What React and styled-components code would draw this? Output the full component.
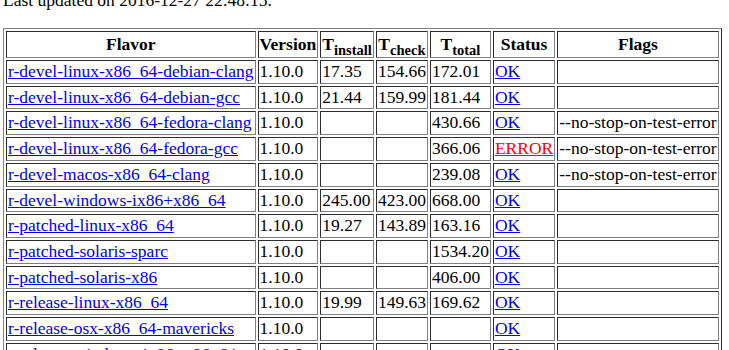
import styled, { createGlobalStyle } from "styled-components";

const GlobalStyle = createGlobalStyle`
  html, body {
    margin: 0;
    padding: 0;
    background: #fff;
  }
  body {
    font-family: "Liberation Serif", "Times New Roman", serif;
    font-size: 17.5px;
    color: #000;
    overflow: hidden;
  }
`;

const Page = styled.div`
  padding-left: 3px;
`;

const Updated = styled.p`
  margin: -10px 0 18px;
  line-height: 20px;
`;

const Table = styled.table`
  border: 1px outset grey;
  border-spacing: 2px;
  border-collapse: separate;
`;

const Th = styled.th`
  border: 1px inset grey;
  padding: 1px;
  font-weight: bold;
  text-align: center;
  white-space: nowrap;
  line-height: 23px;

  sub {
    line-height: 0;
    font-size: 0.83em;
  }
`;

const Td = styled.td`
  border: 1px inset grey;
  padding: 1px;
  text-align: left;
  white-space: nowrap;
  line-height: 19.7px;
`;

const Link = styled.a`
  color: ${(p) => (p.$error ? "#ff0000" : "#0000ee")};
  text-decoration: underline;
`;

const rows = [
  ["r-devel-linux-x86_64-debian-clang", "1.10.0", "17.35", "154.66", "172.01", "OK", ""],
  ["r-devel-linux-x86_64-debian-gcc", "1.10.0", "21.44", "159.99", "181.44", "OK", ""],
  ["r-devel-linux-x86_64-fedora-clang", "1.10.0", "", "", "430.66", "OK", "--no-stop-on-test-error"],
  ["r-devel-linux-x86_64-fedora-gcc", "1.10.0", "", "", "366.06", "ERROR", "--no-stop-on-test-error"],
  ["r-devel-macos-x86_64-clang", "1.10.0", "", "", "239.08", "OK", "--no-stop-on-test-error"],
  ["r-devel-windows-ix86+x86_64", "1.10.0", "245.00", "423.00", "668.00", "OK", ""],
  ["r-patched-linux-x86_64", "1.10.0", "19.27", "143.89", "163.16", "OK", ""],
  ["r-patched-solaris-sparc", "1.10.0", "", "", "1534.20", "OK", ""],
  ["r-patched-solaris-x86", "1.10.0", "", "", "406.00", "OK", ""],
  ["r-release-linux-x86_64", "1.10.0", "19.99", "149.63", "169.62", "OK", ""],
  ["r-release-osx-x86_64-mavericks", "1.10.0", "", "", "", "OK", ""],
  ["r-release-windows-ix86+x86_64", "1.10.0", "", "", "", "OK", ""],
];

export default function App() {
  return (
    <Page>
      <GlobalStyle />
      <Updated>Last updated on 2016-12-27 22:48:15.</Updated>
      <Table>
        <thead>
          <tr>
            <Th>Flavor</Th>
            <Th>Version</Th>
            <Th>T<sub>install</sub></Th>
            <Th>T<sub>check</sub></Th>
            <Th>T<sub>total</sub></Th>
            <Th>Status</Th>
            <Th>Flags</Th>
          </tr>
        </thead>
        <tbody>
          {rows.map((r) => (
            <tr key={r[0]}>
              <Td><Link href="#">{r[0]}</Link></Td>
              <Td>{r[1]}</Td>
              <Td>{r[2]}</Td>
              <Td>{r[3]}</Td>
              <Td>{r[4]}</Td>
              <Td><Link href="#" $error={r[5] === "ERROR"}>{r[5]}</Link></Td>
              <Td>{r[6]}</Td>
            </tr>
          ))}
        </tbody>
      </Table>
    </Page>
  );
}
